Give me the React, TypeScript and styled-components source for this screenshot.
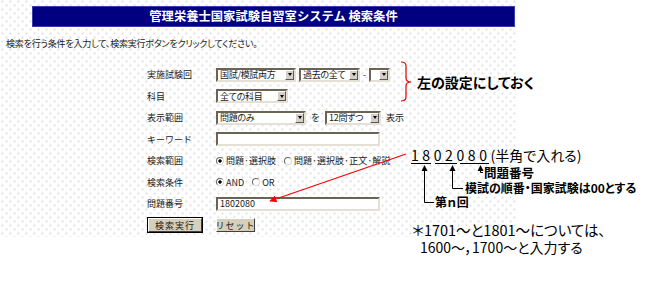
import React from 'react'
import styled, { createGlobalStyle } from 'styled-components'

const GlobalStyle = createGlobalStyle`
  html, body {
    margin: 0;
    padding: 0;
    background: #fff;
  }
  body {
    font-family: "Noto Sans CJK JP", "Noto Sans", sans-serif;
    color: #1a1a1a;
  }
`

const Page = styled.div`
  position: relative;
  width: 646px;
  height: 286px;
  overflow: hidden;
  background: #fff;
`

const Panel = styled.div`
  width: 517px;
  height: 237px;
  padding-top: 6px;
  box-sizing: border-box;
  background-color: #fff;
  background-image:
    radial-gradient(circle, #b4b4b4 0.66px, transparent 0.74px),
    radial-gradient(circle, #b4b4b4 0.66px, transparent 0.74px);
  background-size: 8px 8px;
  background-position: -1.5px -2.5px, 2.5px 1.5px;
`

const TitleBar = styled.h1`
  margin: 0 0 0 32px;
  width: 483px;
  height: 21px;
  box-sizing: border-box;
  border: 1px solid #3c3ca8;
  background: #000080;
  color: #fff;
  font-size: 12.3px;
  font-weight: 700;
  line-height: 19px;
  text-align: center;
`

const Lead = styled.p`
  margin: 11px 0 0 6px;
  font-size: 9px;
  line-height: 12px;
  letter-spacing: -0.2px;
  font-feature-settings: "palt";
  white-space: nowrap;
`

const Form = styled.div`
  display: grid;
  grid-template-columns: 69px auto;
  grid-auto-rows: 21.5px;
  align-items: center;
  margin: 14px 0 0 147px;
  font-size: 9px;
`

const Label = styled.span`
  white-space: nowrap;
`

const Field = styled.div<{ $gap?: number }>`
  display: flex;
  align-items: center;
  gap: ${p => p.$gap ?? 4}px;
  white-space: nowrap;
`

const Select = styled.div<{ $w: number }>`
  display: flex;
  align-items: stretch;
  width: ${p => p.$w}px;
  height: 14px;
  box-sizing: border-box;
  border: 2px solid;
  border-color: #6b6455 #e4e0d6 #e4e0d6 #6b6455;
  background: #fff;
`

const SelectText = styled.span`
  display: flex;
  align-items: center;
  flex: 1;
  min-width: 0;
  padding-left: 2px;
  font-size: 9px;
  letter-spacing: -0.3px;
  font-feature-settings: "palt";
`

const SelectButton = styled.span`
  display: flex;
  flex: none;
  align-items: center;
  justify-content: center;
  width: 9px;
  box-sizing: border-box;
  background: #d4d0c8;
  border: 1px solid;
  border-color: #fff #5a5a5a #5a5a5a #fff;

  &::after {
    content: '';
    border-left: 2.5px solid transparent;
    border-right: 2.5px solid transparent;
    border-top: 3px solid #000;
  }
`

const TextBox = styled.div`
  display: flex;
  align-items: center;
  width: 164px;
  height: 14px;
  box-sizing: border-box;
  border: 2px solid;
  border-color: #6b6455 #e4e0d6 #e4e0d6 #6b6455;
  background: #fff;
  padding-left: 2px;
  font-size: 9px;
`

const Option = styled.span`
  display: inline-flex;
  align-items: center;
  gap: 2px;
  font-feature-settings: "palt";
`

const Radio = styled.span<{ $on?: boolean }>`
  display: inline-block;
  width: 8px;
  height: 8px;
  box-sizing: border-box;
  border-radius: 50%;
  border: 1px solid;
  border-color: #6a6a6a #dcdcdc #dcdcdc #6a6a6a;
  background: ${p => (p.$on ? 'radial-gradient(circle, #000 0 1.4px, #fff 1.9px)' : '#fff')};
`

const Button = styled.span<{ $w: number; $primary?: boolean }>`
  display: inline-flex;
  align-items: center;
  justify-content: center;
  width: ${p => p.$w}px;
  height: 14px;
  box-sizing: border-box;
  margin-left: ${p => (p.$primary ? 1 : 0)}px;
  background: #d6cfbc;
  border: 1px solid;
  border-color: #fff #404040 #404040 #fff;
  outline: ${p => (p.$primary ? '1px solid #000' : 'none')};
  font-size: 9px;
  letter-spacing: 1px;
`

const Overlay = styled.svg`
  position: absolute;
  left: 0;
  top: 0;
  pointer-events: none;
`

const Note = styled.div<{ $x: number; $y: number; $size: number; $bold?: boolean }>`
  position: absolute;
  left: ${p => p.$x}px;
  top: ${p => p.$y}px;
  font-size: ${p => p.$size}px;
  font-weight: ${p => (p.$bold ? 700 : 400)};
  line-height: 1;
  font-feature-settings: "palt";
  white-space: nowrap;
  color: #000;
`

const Digits = styled.span`
  letter-spacing: 3.6px;
`

const App: React.FC = () => {
  return (
    <Page>
      <GlobalStyle />
      <Panel>
        <TitleBar>管理栄養士国家試験自習室システム 検索条件</TitleBar>
        <Lead>検索を行う条件を入力して、検索実行ボタンをクリックしてください。</Lead>
        <Form>
          <Label>実施試験回</Label>
          <Field $gap={3}>
            <Select $w={80}>
              <SelectText>国試/模試両方</SelectText>
              <SelectButton />
            </Select>
            <Select $w={61}>
              <SelectText>過去の全て</SelectText>
              <SelectButton />
            </Select>
            <span>-</span>
            <Select $w={21}>
              <SelectText />
              <SelectButton />
            </Select>
          </Field>

          <Label>科目</Label>
          <Field>
            <Select $w={72}>
              <SelectText>全ての科目</SelectText>
              <SelectButton />
            </Select>
          </Field>

          <Label>表示範囲</Label>
          <Field $gap={5}>
            <Select $w={90}>
              <SelectText>問題のみ</SelectText>
              <SelectButton />
            </Select>
            <span>を</span>
            <Select $w={56}>
              <SelectText>12問ずつ</SelectText>
              <SelectButton />
            </Select>
            <span>表示</span>
          </Field>

          <Label>キーワード</Label>
          <Field>
            <TextBox />
          </Field>

          <Label>検索範囲</Label>
          <Field $gap={8}>
            <Option>
              <Radio $on />
              問題·選択肢
            </Option>
            <Option>
              <Radio />
              問題·選択肢·正文·解説
            </Option>
          </Field>

          <Label>検索条件</Label>
          <Field $gap={8}>
            <Option>
              <Radio $on />
              AND
            </Option>
            <Option>
              <Radio />
              OR
            </Option>
          </Field>

          <Label>問題番号</Label>
          <Field>
            <TextBox>1802080</TextBox>
          </Field>

          <Field>
            <Button $w={54} $primary>
              検索実行
            </Button>
          </Field>
          <Field>
            <Button $w={39}>リセット</Button>
          </Field>
        </Form>
      </Panel>

      <Overlay width={646} height={286} viewBox="0 0 646 286">
        <defs>
          <marker id="redHead" viewBox="0 0 10 10" refX="9" refY="5" markerWidth="6" markerHeight="6" orient="auto">
            <path d="M0 0 L10 5 L0 10 z" fill="#ff0000" />
          </marker>
        </defs>
        <path
          d="M401 62 Q406 62 406 66 L406 78 Q406 82 411 82 Q406 82 406 86 L406 97 Q406 101 401 101"
          fill="none"
          stroke="#e00000"
          strokeWidth={1.2}
        />
        <line x1={406} y1={154} x2={270} y2={201} stroke="#ff0000" strokeWidth={1.2} markerEnd="url(#redHead)" />

        <g stroke="#000" strokeWidth={1} fill="none">
          <line x1={411} y1={163.5} x2={431} y2={163.5} />
          <line x1={435} y1={163.5} x2={457} y2={163.5} />
          <line x1={460} y1={163.5} x2={489} y2={163.5} />
          <path d="M424.5 168 V202.5 H434" />
          <path d="M452.5 168 V188.5 H463" />
          <path d="M480.5 168 V172.5 H483" />
        </g>
        <g fill="#000">
          <path d="M424.5 165 L421.5 171 L427.5 171 z" />
          <path d="M452.5 165 L449.5 171 L455.5 171 z" />
          <path d="M480.5 165 L477.5 171 L483.5 171 z" />
        </g>
      </Overlay>

      <Note $x={417} $y={75} $size={14} $bold>
        左の設定にしておく
      </Note>
      <Note $x={411} $y={148} $size={14}>
        <Digits>1802080</Digits>(半角で入れる)
      </Note>
      <Note $x={484} $y={166.5} $size={12.5} $bold>
        問題番号
      </Note>
      <Note $x={465} $y={182} $size={12} $bold>
        模試の順番・国家試験は00とする
      </Note>
      <Note $x={435} $y={196} $size={12} $bold>
        第ｎ回
      </Note>
      <Note $x={412} $y={223} $size={14.5}>
        ＊1701～と1801～については、
      </Note>
      <Note $x={420} $y={240} $size={14}>
        1600～，1700～と入力する
      </Note>
    </Page>
  )
}

export default App
